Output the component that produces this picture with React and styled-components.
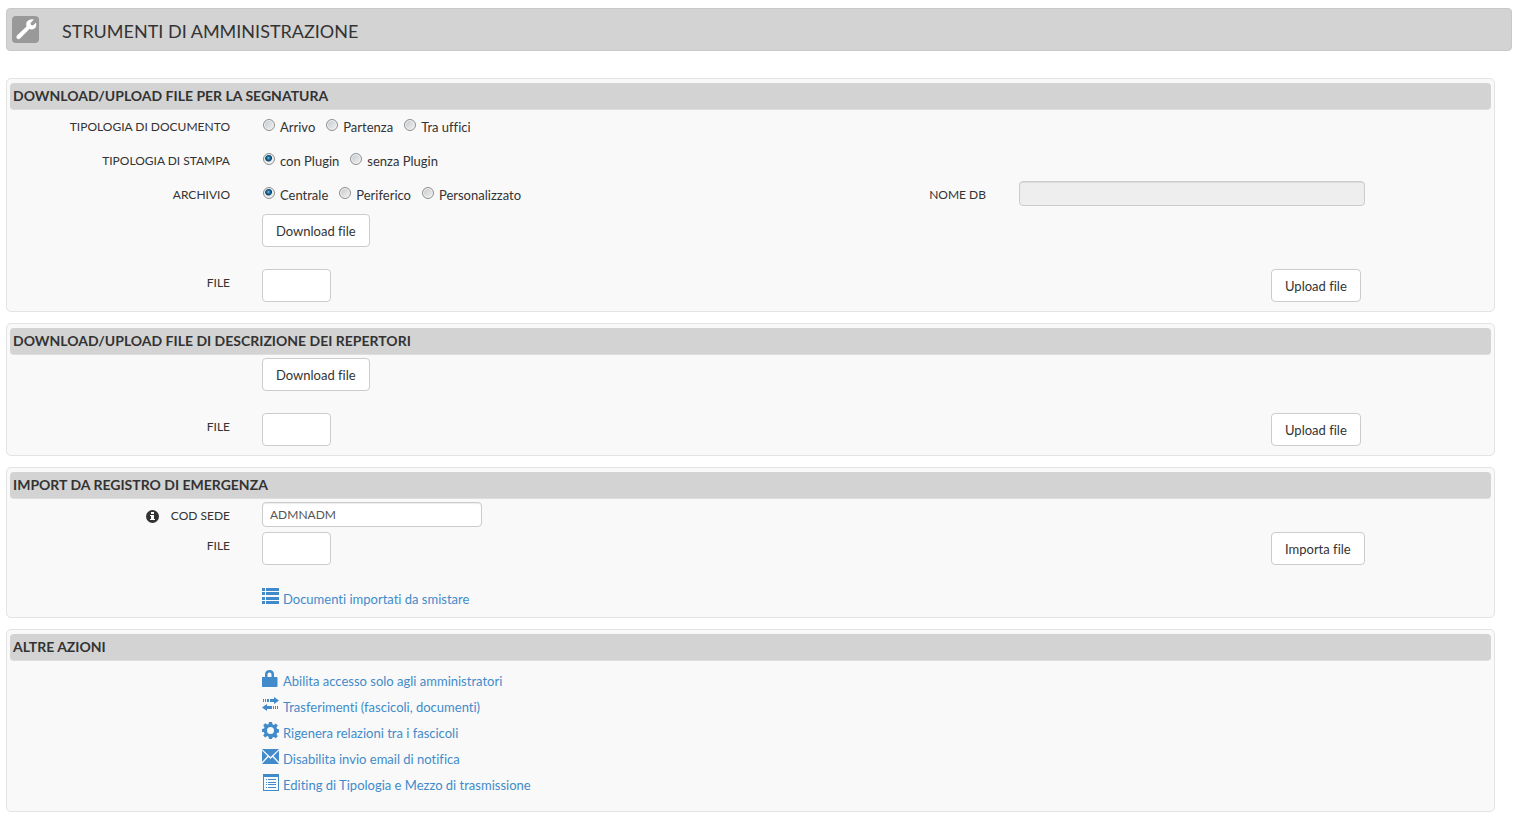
import React from "react";
import styled, { createGlobalStyle } from "styled-components";

const GlobalStyle = createGlobalStyle`
  *, *::before, *::after { box-sizing: border-box; }
  body {
    margin: 0;
    background: #fff;
    color: #333;
    font: 13px/20px Lato, "Open Sans", sans-serif;
    font-variant-ligatures: none;
  }
  button, input { font: inherit; font-variant-ligatures: none; }
`;

const Page = styled.div`
  padding: 8px 8px 8px 6px;
`;

const Header = styled.header`
  display: flex;
  align-items: center;
  gap: 23px;
  height: 43px;
  margin-bottom: 27px;
  padding: 0 5px;
  background: #d3d3d3;
  border: 1px solid #c8c8c8;
  border-radius: 4px;
`;

const HeaderIcon = styled.svg`
  width: 27px;
  height: 27px;
`;

const Title = styled.h1`
  margin: 0;
  padding-top: 2px;
  font-size: 18px;
  line-height: 24px;
  font-weight: 400;
  text-transform: uppercase;
`;

const Main = styled.main`
  display: flex;
  flex-direction: column;
  gap: 11px;
  margin-right: 17px;
`;

const PanelBox = styled.section`
  padding: 4px 3px 0;
  background: #f9f9f9;
  border: 1px solid #e3e3e3;
  border-radius: 5px;
`;

const PanelTitle = styled.h2`
  margin: 0;
  padding: 0 3px;
  height: 27px;
  border-bottom: 1px solid #dedede;
  border-radius: 4px;
  background: #d3d3d3;
  font-size: 14px;
  line-height: 26px;
  font-weight: 700;
  text-transform: uppercase;
`;

const PanelBody = styled.div`
  display: flex;
  flex-direction: column;
  gap: ${(p) => p.$gap}px;
  padding: 3px 0 9px;
`;

const Row = styled.div`
  display: grid;
  grid-template-columns: 220px minmax(0, 1fr) ${(p) => p.$aside || "220px"};
  column-gap: 32px;
  align-items: start;
`;

const Stack = styled.div`
  display: flex;
  flex-direction: column;
  gap: ${(p) => p.$gap}px;
`;

const Label = styled.label`
  display: flex;
  justify-content: flex-end;
  align-items: center;
  gap: 12px;
  font-size: 12px;
  line-height: 28px;
  text-transform: uppercase;
`;

const Options = styled.div`
  grid-column: 2;
  display: flex;
  gap: 11px;
  padding-left: 1px;
`;

const Option = styled.label`
  display: flex;
  align-items: center;
  gap: 5px;
  line-height: 28px;
`;

const Radio = styled.input`
  appearance: none;
  width: 12px;
  height: 12px;
  margin: 0 0 4px;
  border: 1px solid #8e8f8f;
  border-radius: 50%;
  background: linear-gradient(135deg, #c4c8cc, #f2f2f2);
  box-shadow: inset 0 0 0 1px #f4f4f4;

  &:checked {
    background: radial-gradient(circle at 45% 40%, #9adcf8 0, #2a86bd 1px, #0d3f66 3px, #e6eaec 4px);
  }
`;

const Button = styled.button`
  height: 33px;
  padding: 0 13px;
  justify-self: start;
  background: #fff;
  border: 1px solid #ccc;
  border-radius: 4px;
  color: #333;
  white-space: nowrap;
`;

const TextInput = styled.input`
  height: 25px;
  width: ${(p) => p.$width};
  padding: 0 7px;
  background: #fff;
  border: 1px solid #ccc;
  border-radius: 4px;
  box-shadow: inset 0 1px 1px rgba(0, 0, 0, 0.075);
  color: #555;
  font-size: 12px;

  &:disabled {
    background: #eee;
  }
`;

const FileInput = styled.input`
  width: 69px;
  height: 33px;
  background: #fff;
  border: 1px solid #ccc;
  border-radius: 4px;
  color: transparent;

  &::file-selector-button { display: none; }
`;

const DbField = styled.div`
  display: flex;
  align-items: start;
  gap: 33px;
  padding-right: 126px;
`;

const Links = styled.ul`
  grid-column: 2;
  display: flex;
  flex-direction: column;
  gap: 5px;
  margin: 0;
  padding: ${(p) => (p.$roomy ? "5px 0 8px" : "0")};
  list-style: none;
`;

const ActionLink = styled.a`
  display: flex;
  align-items: center;
  gap: 4px;
  height: 21px;
  color: #428bca;
  text-decoration: none;

  svg { width: 17px; height: 17px; margin-bottom: 2px; }
  span { padding-top: 2px; }
`;

const InfoSvg = styled.svg`
  width: 13px;
  height: 13px;
`;

const icons = {
  list: (
    <path d="M0 0h3v3H0zM4 0h13v3H4zM0 4h3v3H0zM4 4h13v3H4zM0 9h3v3H0zM4 9h13v3H4zM0 13h3v3H0zM4 13h13v3H4z" />
  ),
  lock: (
    <path d="M3 7V4.500Q3 0 7.500 0T12 4.500V7h2.500a1 1 0 0 1 1 1v8a1 1 0 0 1-1 1h-14a1 1 0 0 1-1-1V8a1 1 0 0 1 1-1zM5.500 7h4V4.500q0-2-2-2t-2 2z" />
  ),
  transfer: (
    <path d="M1 3h1v3H1zM3 3h1v3H3zM5 3h2v3H5zM8 3h4V1l5 3.500L12 8V6H8zM16 10h-1v3h1zM14 10h-1v3h1zM12 10h-1v3h1zM10 10H5V8l-5 3.500L5 15v-2h5z" />
  ),
  cog: (
    <path
      fillRule="evenodd"
      d="M7 0h3l.5 2.300 1.300.6 2-1.300 2 2-1.300 2 .6 1.300 2.200.5v3l-2.200.5-.6 1.300 1.300 2-2 2-2-1.300-1.300.6L10 17H7l-.5-2.300-1.300-.6-2 1.300-2-2 1.300-2-.6-1.300L0 10V7l2-.5.500-1.300-1.300-2 2-2 2 1.300L6.500 2.300zM8.500 5a3.500 3.500 0 1 0 0 7 3.500 3.500 0 0 0 0-7z"
    />
  ),
  envelope: (
    <path d="M0 1h17L8.500 9zM0 2.500L5.500 8 0 14zM17 2.500V14l-5.500-6zM6.500 9l2 2 2-2 6.500 7H0z" />
  ),
  form: (
    <path
      fillRule="evenodd"
      d="M1 0h16v17H1zM2 3v13h14V3zM4 5h1v1H4zM6 5h8v1H6zM4 8h1v1H4zM6 8h8v1H6zM4 10h1v1H4zM6 10h8v1H6zM4 13h1v1H4zM6 13h8v1H6z"
    />
  ),
};

function IconLink({ icon, children }) {
  return (
    <li>
      <ActionLink href="#">
        <svg viewBox="0 0 17 17" fill="currentColor" aria-hidden="true">{icons[icon]}</svg>
        <span>{children}</span>
      </ActionLink>
    </li>
  );
}

function Panel({ title, gap = 22, children }) {
  return (
    <PanelBox>
      <PanelTitle>{title}</PanelTitle>
      <PanelBody $gap={gap}>{children}</PanelBody>
    </PanelBox>
  );
}

function RadioRow({ label, name, options, selected, aside, asideWidth }) {
  return (
    <Row role="radiogroup" aria-labelledby={name} $aside={asideWidth}>
      <Label as="span" id={name}>{label}</Label>
      <Options>
        {options.map((o) => (
          <Option key={o}>
            <Radio type="radio" name={name} defaultChecked={o === selected} />
            {o}
          </Option>
        ))}
      </Options>
      {aside}
    </Row>
  );
}

function DownloadRow() {
  return (
    <Row>
      <span />
      <Button type="button">Download file</Button>
    </Row>
  );
}

function FileRow({ id, action }) {
  return (
    <Row>
      <Label htmlFor={id}>File</Label>
      <FileInput id={id} type="file" />
      <Button type="button">{action}</Button>
    </Row>
  );
}

export default function App() {
  return (
    <Page>
      <GlobalStyle />
      <Header>
        <HeaderIcon viewBox="0 0 27 27" aria-hidden="true">
          <rect width="27" height="27" rx="4" fill="#999" />
          <path
            fill="#fff"
            d="M22 3.500L18.500 7l.5 2 2 .5L24 6.500q1 4-1.500 6-2.500 1.500-5 .5L8 22.500q-1.500 1.300-3 0t0-3L14.500 10.500Q13.500 7 15.500 5 18 2.500 22 3.500z"
          />
        </HeaderIcon>
        <Title>Strumenti di amministrazione</Title>
      </Header>
      <Main>
        <Panel title="Download/upload file per la segnatura">
          <Stack $gap={5}>
            <Stack $gap={6}>
              <RadioRow label="Tipologia di documento" name="documento" options={["Arrivo", "Partenza", "Tra uffici"]} />
              <RadioRow label="Tipologia di stampa" name="stampa" options={["con Plugin", "senza Plugin"]} selected="con Plugin" />
              <RadioRow
                label="Archivio"
                name="archivio"
                options={["Centrale", "Periferico", "Personalizzato"]}
                selected="Centrale"
                asideWidth="auto"
                aside={
                  <DbField>
                    <Label htmlFor="nome-db">Nome DB</Label>
                    <TextInput id="nome-db" $width="346px" disabled />
                  </DbField>
                }
              />
            </Stack>
            <DownloadRow />
          </Stack>
          <FileRow id="file-segnatura" action="Upload file" />
        </Panel>

        <Panel title="Download/upload file di descrizione dei repertori">
          <DownloadRow />
          <FileRow id="file-repertori" action="Upload file" />
        </Panel>

        <Panel title="Import da registro di emergenza">
          <Stack $gap={2}>
            <Row>
              <Label htmlFor="cod-sede">
                <InfoSvg viewBox="0 0 13 13" aria-hidden="true">
                  <circle cx="6.500" cy="6.500" r="6.500" fill="#333" />
                  <path fill="#fff" d="M5 2h3v2H5zM4 5h4v4h1v1H4V9h1V6H4z" />
                </InfoSvg>
                Cod sede
              </Label>
              <TextInput id="cod-sede" $width="220px" defaultValue="ADMNADM" />
            </Row>
            <FileRow id="file-registro" action="Importa file" />
          </Stack>
          <Row>
            <Links>
              <IconLink icon="list">Documenti importati da smistare</IconLink>
            </Links>
          </Row>
        </Panel>

        <Panel title="Altre azioni">
          <Row>
            <Links $roomy>
              <IconLink icon="lock">Abilita accesso solo agli amministratori</IconLink>
              <IconLink icon="transfer">Trasferimenti (fascicoli, documenti)</IconLink>
              <IconLink icon="cog">Rigenera relazioni tra i fascicoli</IconLink>
              <IconLink icon="envelope">Disabilita invio email di notifica</IconLink>
              <IconLink icon="form">Editing di Tipologia e Mezzo di trasmissione</IconLink>
            </Links>
          </Row>
        </Panel>
      </Main>
    </Page>
  );
}
